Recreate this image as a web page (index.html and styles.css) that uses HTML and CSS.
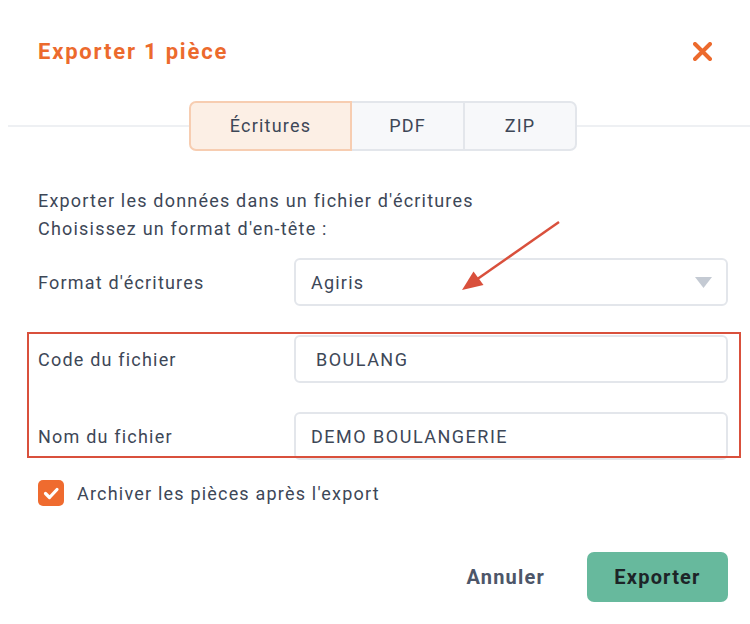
FILE: index.html
```html
<!DOCTYPE html>
<html lang="fr">
<head>
  <meta charset="UTF-8">
  <title>Exporter 1 pièce</title>
  <link rel="stylesheet" href="styles.css">
</head>
<body>
  <div class="modal">
    <div class="modal-header">
      <h1>Exporter 1 pièce</h1>
      <button class="close" aria-label="Fermer">
        <svg width="19" height="19" viewBox="0 0 19 19">
          <path d="M2 2L17 17M17 2L2 17" stroke="#ec6a2d" stroke-width="4" stroke-linecap="round"/>
        </svg>
      </button>
    </div>

    <div class="tab-bar">
      <div class="tabs">
        <div class="tab active">Écritures</div>
        <div class="tab">PDF</div>
        <div class="tab">ZIP</div>
      </div>
    </div>

    <div class="modal-body">
      <p class="intro">Exporter les données dans un fichier d'écritures<br>Choisissez un format d'en-tête :</p>

      <div class="form">
        <label>Format d'écritures</label>
        <div class="select">
          <span>Agiris</span>
          <svg width="17" height="11" viewBox="0 0 17 11"><path d="M0 0H17L8.5 11Z" fill="#c4cad3"/></svg>
        </div>

        <label>Code du fichier</label>
        <input class="field code" type="text" value="BOULANG">

        <label>Nom du fichier</label>
        <input class="field" type="text" value="DEMO BOULANGERIE">
      </div>

      <label class="check">
        <span class="box">
          <svg width="26" height="26" viewBox="0 0 26 26"><path d="M7.5 13.5L11.5 17.5L19 9.5" fill="none" stroke="#fff" stroke-width="3.2" stroke-linecap="round" stroke-linejoin="round"/></svg>
        </span>
        Archiver les pièces après l'export
      </label>

      <div class="actions">
        <button class="btn-cancel">Annuler</button>
        <button class="btn-export">Exporter</button>
      </div>
    </div>
  </div>

  <!-- annotations par-dessus la capture -->
  <svg class="annotations" width="750" height="624" viewBox="0 0 750 624">
    <line x1="559" y1="222" x2="476" y2="280" stroke="#d9503c" stroke-width="2.5"/>
    <path d="M462 290L483.5 285L473.5 271.5Z" fill="#d9503c"/>
    <rect x="28" y="333" width="712" height="124" fill="none" stroke="#d9503c" stroke-width="2"/>
  </svg>
</body>
</html>
```

FILE: styles.css
```css
body {
  margin: 0;
  background-color: #fff;
  font-family: 'Roboto', 'Liberation Sans', sans-serif;
  color: #3d4757;
  letter-spacing: 1.2px;
  overflow: hidden;
  position: relative;
}

.modal {
  width: 750px;
}

.modal-header {
  display: flex;
  justify-content: space-between;
  align-items: center;
  padding: 34px 38px 0 38px;
  height: 34px;
}
.modal-header h1 {
  margin: 0;
  font-size: 22px;
  font-weight: 700;
  color: #ec6a2d;
  letter-spacing: 1.8px;
}
.close {
  border: none;
  background: none;
  padding: 0;
  width: 19px;
  height: 19px;
  display: flex;
  cursor: pointer;
}

.tab-bar {
  display: flex;
  align-items: center;
  width: 750px;
  margin: 33px 0 0 8px;
}
.tab-bar::before,
.tab-bar::after {
  content: '';
  flex: 1;
  height: 2px;
  background-color: #eef0f3;
}
.tabs {
  display: flex;
}
.tab {
  height: 46px;
  line-height: 46px;
  text-align: center;
  font-size: 18px;
  color: #3d4757;
  background-color: #f7f8fa;
  border: 2px solid #e3e6eb;
  border-left: none;
  width: 111px;
}
.tab:last-child {
  border-radius: 0 7px 7px 0;
  width: 110px;
}
.tab.active {
  width: 159px;
  background-color: #fcefe5;
  border: 2px solid #f7cdb1;
  border-radius: 7px 0 0 7px;
}

.modal-body {
  padding: 36px 22px 0 38px;
}
.intro {
  margin: 0;
  font-size: 18px;
  line-height: 28px;
}

.form {
  display: grid;
  grid-template-columns: 256px 1fr;
  row-gap: 29px;
  align-items: center;
  margin-top: 15px;
}
.form label {
  font-size: 18px;
}
.select,
.field {
  box-sizing: border-box;
  height: 48px;
  border: 2px solid #e3e6eb;
  border-radius: 6px;
  background-color: #fff;
  font-family: inherit;
  font-size: 18px;
  letter-spacing: 1.5px;
  color: #3d4757;
}
.select {
  display: flex;
  align-items: center;
  justify-content: space-between;
  padding: 0 14px 0 15px;
  letter-spacing: 1.2px;
}
.field {
  width: 100%;
  padding: 0 15px;
  outline: none;
}
.field.code {
  padding-left: 20px;
}

.check {
  display: flex;
  align-items: center;
  gap: 13px;
  margin-top: 20px;
  font-size: 18px;
}
.box {
  width: 26px;
  height: 26px;
  border-radius: 5px;
  background-color: #ef6b2f;
  display: flex;
}

.actions {
  display: flex;
  justify-content: flex-end;
  align-items: center;
  gap: 30px;
  margin-top: 46px;
}
.actions button {
  font-family: inherit;
  font-size: 20px;
  font-weight: 700;
  letter-spacing: 1.2px;
  border: none;
  cursor: pointer;
}
.btn-cancel {
  background: none;
  color: #4d5669;
  padding: 0 12px;
}
.btn-export {
  background-color: #67b99d;
  color: #1d2427;
  height: 50px;
  width: 141px;
  border-radius: 7px;
}

.annotations {
  position: absolute;
  top: 0;
  left: 0;
  pointer-events: none;
}
```
